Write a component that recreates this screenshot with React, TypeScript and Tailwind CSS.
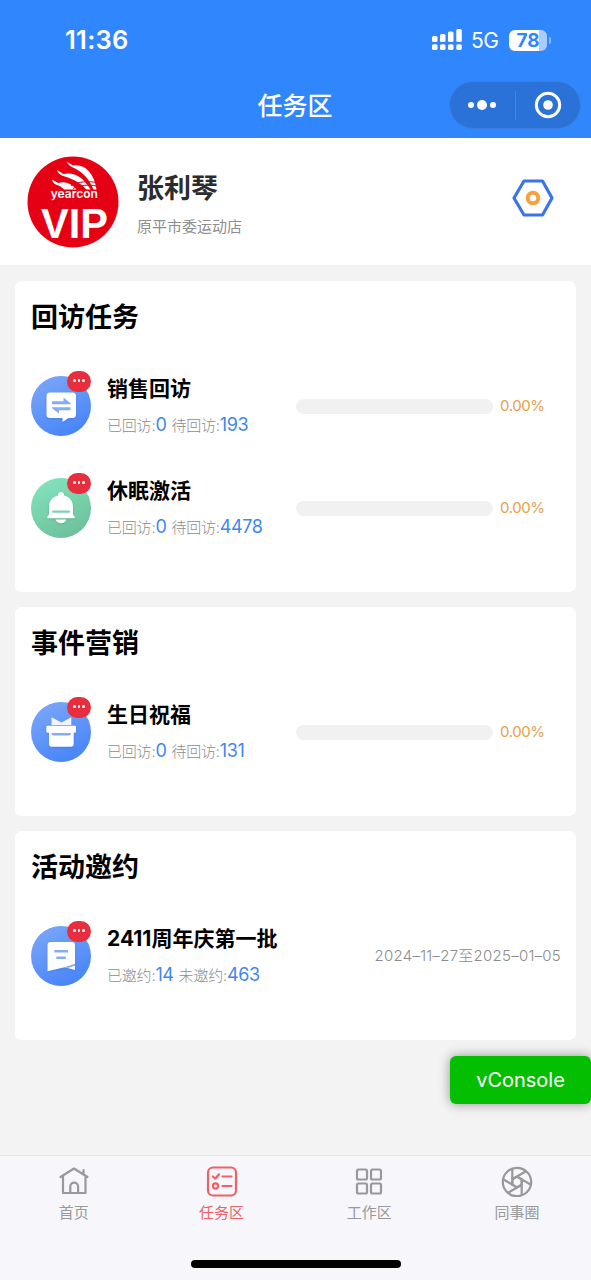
import type { ReactNode } from 'react';

type Task = {
  id: number;
  title: string;
  doneLabel: string;
  done: number;
  todoLabel: string;
  todo: number;
  icon: ReactNode;
  percent?: number;
  period?: string;
};

function ChatIcon() {
  return (
    <svg viewBox="0 0 60 60" className="w-15 h-15 block">
      <defs>
        <linearGradient id="chatBg" x1="0.2" y1="0" x2="0.7" y2="1">
          <stop offset="0" stopColor="#7ba6f8" />
          <stop offset="1" stopColor="#4684f8" />
        </linearGradient>
      </defs>
      <circle cx="30" cy="30" r="30" fill="url(#chatBg)" />
      <path d="M19 16.500H41.500a3.500 3.500 0 0 1 3.500 3.500V38.500a3.500 3.500 0 0 1-3.500 3.500H37.500L31.500 46V42H19a3.500 3.500 0 0 1-3.500-3.500V20a3.500 3.500 0 0 1 3.500-3.500z" fill="#fff" style={{ filter: 'drop-shadow(0 1px 1px #3468d066)' }} />
      <path d="M21 25.200H32.500V21.500L39.500 27.200V28.200H21z" fill="#86acf6" />
      <path d="M39.500 31.200H21V32.200L28 37.500V34.200H39.500z" fill="#86acf6" />
    </svg>
  );
}

function BellIcon() {
  return (
    <svg viewBox="0 0 60 60" className="w-15 h-15 block">
      <defs>
        <linearGradient id="bellBg" x1="0.2" y1="0" x2="0.7" y2="1">
          <stop offset="0" stopColor="#83e3bd" />
          <stop offset="1" stopColor="#6cc09a" />
        </linearGradient>
      </defs>
      <circle cx="30" cy="30" r="30" fill="url(#bellBg)" />
      <g fill="#fff" style={{ filter: 'drop-shadow(0 1px 1px #3f8f6b66)' }}>
        <path d="M30 14a3 3 0 0 1 3 3v.6c5.500 1.200 9 5.600 9 11V36c0 1 1.400 1.700 1.700 3V40.300H16.300V39c.3-1.300 1.700-2 1.700-3V28.600c0-5.400 3.500-9.800 9-11V17a3 3 0 0 1 3-3z" />
        <path d="M24.500 41.500h11c-.8 2.400-3 3.700-5.500 3.700s-4.700-1.300-5.500-3.700z" />
      </g>
      <rect x="21" y="32.500" width="18" height="2.200" rx="1" fill="#83cfab" />
    </svg>
  );
}

function GiftIcon() {
  return (
    <svg viewBox="0 0 60 60" className="w-15 h-15 block">
      <defs>
        <linearGradient id="giftBg" x1="0.2" y1="0" x2="0.7" y2="1">
          <stop offset="0" stopColor="#7ba6f8" />
          <stop offset="1" stopColor="#4684f8" />
        </linearGradient>
      </defs>
      <circle cx="30" cy="30" r="30" fill="url(#giftBg)" />
      <path d="M20.500 15.200L30.500 20.500L40.300 15.200V23H20.500z" fill="#eff4ff" />
      <g fill="#fff" style={{ filter: 'drop-shadow(0 1px 1px #3468d066)' }}>
        <rect x="15.300" y="23.700" width="29.700" height="7" rx="1.200" />
        <path d="M18 30H42.700V42a2.800 2.800 0 0 1-2.800 2.800H20.800A2.800 2.800 0 0 1 18 42z" />
      </g>
      <path d="M20.500 31H40a2.500 2.500 0 0 1-2.500 2.500H23A2.500 2.500 0 0 1 20.500 31z" fill="#86acf6" />
    </svg>
  );
}

function NoteIcon() {
  return (
    <svg viewBox="0 0 60 60" className="w-15 h-15 block">
      <defs>
        <linearGradient id="noteBg" x1="0.2" y1="0" x2="0.7" y2="1">
          <stop offset="0" stopColor="#7ba6f8" />
          <stop offset="1" stopColor="#4684f8" />
        </linearGradient>
      </defs>
      <circle cx="30" cy="30" r="30" fill="url(#noteBg)" />
      <path d="M19.300 16H41a3 3 0 0 1 3 3V44L33.500 41.200L16.500 45.300V19a3 3 0 0 1 2.800-3z" fill="#fff" style={{ filter: 'drop-shadow(0 1px 1px #3468d066)' }} />
      <path d="M44 37.800L33.500 41.200L36.500 42L44 39.800z" fill="#86acf6" />
      <rect x="23.300" y="24" width="13.700" height="2.500" fill="#86acf6" />
      <rect x="25.300" y="30.500" width="9.500" height="2.500" fill="#86acf6" />
    </svg>
  );
}

const sections: { id: number; title: string; tasks: Task[] }[] = [
  {
    id: 1,
    title: '回访任务',
    tasks: [
      { id: 11, title: '销售回访', doneLabel: '已回访:', done: 0, todoLabel: '待回访:', todo: 193, icon: <ChatIcon />, percent: 0 },
      { id: 12, title: '休眠激活', doneLabel: '已回访:', done: 0, todoLabel: '待回访:', todo: 4478, icon: <BellIcon />, percent: 0 },
    ],
  },
  {
    id: 2,
    title: '事件营销',
    tasks: [
      { id: 21, title: '生日祝福', doneLabel: '已回访:', done: 0, todoLabel: '待回访:', todo: 131, icon: <GiftIcon />, percent: 0 },
    ],
  },
  {
    id: 3,
    title: '活动邀约',
    tasks: [
      { id: 31, title: '2411周年庆第一批', doneLabel: '已邀约:', done: 14, todoLabel: '未邀约:', todo: 463, icon: <NoteIcon />, period: '2024–11–27至2025–01–05' },
    ],
  },
];

function StatusBar() {
  return (
    <div className="flex items-center justify-between h-20 pl-[65px] pr-10 text-white">
      <span className="text-[25.5px] font-semibold leading-none tracking-[0.3px]">11:36</span>
      <div className="flex items-center">
        <svg viewBox="0 0 30 22" className="w-[30px] h-[22px] mr-[9px]" fill="#fff">
          <rect x="0" y="7" width="5.500" height="6" rx="1.500" />
          <rect x="8" y="5" width="5.500" height="8" rx="1.500" />
          <rect x="16" y="2.500" width="5.500" height="10.500" rx="1.500" />
          <rect x="24.300" y="0" width="5.500" height="13" rx="1.500" />
          <rect x="0" y="15.200" width="5.500" height="5.800" rx="1.500" />
          <rect x="8" y="15.200" width="5.500" height="5.800" rx="1.500" />
          <rect x="16" y="15.200" width="5.500" height="5.800" rx="1.500" />
          <rect x="24.300" y="15.200" width="5.500" height="5.800" rx="1.500" />
        </svg>
        <span className="w-[38px] text-[21px] leading-none tracking-[-0.6px]">5G</span>
        <div className="w-[38px] h-[21px] rounded-[6px] overflow-hidden bg-[linear-gradient(90deg,#fff_78%,#a9cbff_78%)] flex items-center justify-center text-[#2f86fd] text-[19px] font-bold leading-none">
          78
        </div>
        <div className="w-[2px] h-[7px] ml-[2px] rounded-r-full bg-[#8dbaff]"></div>
      </div>
    </div>
  );
}

function NavBar() {
  return (
    <div className="grid grid-cols-[1fr_auto_1fr] items-center h-[50px] pr-[10px]">
      <div></div>
      <h1 className="ml-[9px] mt-[2px] text-[25px] font-medium text-white leading-none">任务区</h1>
      <div className="justify-self-end flex items-center w-[132px] h-12 rounded-full bg-[#2a72d8] border border-[#3d80dc]">
        <div className="flex-1 flex items-center justify-center gap-[3px]">
          <span className="w-[6px] h-[6px] rounded-full bg-white"></span>
          <span className="w-[10px] h-[10px] rounded-full bg-white"></span>
          <span className="w-[6px] h-[6px] rounded-full bg-white"></span>
        </div>
        <div className="w-px h-[29px] bg-[#4485dd]"></div>
        <div className="flex-1 flex items-center justify-center">
          <svg viewBox="0 0 28 28" className="w-7 h-7">
            <circle cx="14" cy="14" r="11.700" fill="none" stroke="#fff" strokeWidth="3" />
            <circle cx="14" cy="14" r="4.800" fill="#fff" />
          </svg>
        </div>
      </div>
    </div>
  );
}

function Avatar() {
  return (
    <svg viewBox="0 0 92 92" className="w-[92px] h-[92px]">
      <circle cx="46" cy="46" r="45.500" fill="#e60013" />
      <g fill="#fff">
        <path d="M39.500 5.500L46 9.500C57 7.500 67 16 69.500 33.500H66.500C62 23 56 16 46.500 11.800C43.500 10.500 40.500 8.500 39.500 5.500z" />
        <path d="M30 14L36.500 18C47 15.500 56 21 63.500 33.500H59.500C52 26 46 23 37 20.300C33.500 19.200 30.500 17 30 14z" />
        <path d="M25 23.500L31 27C38 25 44 27.500 49.500 33.500H37C35 31 33 30 30 29C27.500 28 25.500 26.500 25 23.500z" />
      </g>
      <g fill="none" stroke="#e60013" strokeWidth="1">
        <path d="M44 29.500C52 25.500 60 25 70 26.500" />
        <path d="M46 32.500C53 29 61 28.500 70 30" />
      </g>
      <text x="47.300" y="41.500" textAnchor="middle" textLength="47" lengthAdjust="spacingAndGlyphs" fontFamily="Inter, sans-serif" fontWeight="600" fontSize="12" fill="#fff">yearcon</text>
      <text x="47.500" y="81.500" textAnchor="middle" textLength="67" lengthAdjust="spacingAndGlyphs" fontFamily="'Liberation Sans', sans-serif" fontWeight="700" fontSize="43" fill="#fff">VIP</text>
    </svg>
  );
}

function TaskRow({ task }: { task: Task }) {
  return (
    <div className="flex items-center h-[102px] pl-4 pr-[15px]">
      <div className="relative shrink-0 mr-4">
        {task.icon}
        <div className="absolute -top-[5px] right-0 w-6 h-[21px] rounded-full bg-[#e82e3e] flex items-center justify-center gap-[2px] pb-[2px]">
          <span className="w-[2.4px] h-[2.4px] rounded-full bg-white"></span>
          <span className="w-[2.4px] h-[2.4px] rounded-full bg-white"></span>
          <span className="w-[2.4px] h-[2.4px] rounded-full bg-white"></span>
        </div>
      </div>
      <div className="flex-1 whitespace-nowrap pt-[2px]">
        <h3 className="text-[21px] leading-[30px] font-bold text-black">{task.title}</h3>
        <p className="mt-[7px] text-[15px] leading-7 font-light tracking-[-0.2px] text-[#8c8c8c]">
          {task.doneLabel}
          <span className="text-[18px] font-normal tracking-[-0.4px] text-[#3f87ee] mr-[5px]">{task.done}</span>
          {task.todoLabel}
          <span className="text-[18px] font-normal tracking-[-0.4px] text-[#3f87ee]">{task.todo}</span>
        </p>
      </div>
      {task.period ? (
        <span className="text-[15px] font-light tracking-[0.25px] text-[#8c8c8c] whitespace-nowrap">{task.period}</span>
      ) : (
        <div className="flex items-center w-[265px]">
          <div className="w-[197px] h-[15px] rounded-full bg-[#f1f1f1] overflow-hidden">
            <div className="h-full bg-[#e6a04c]" style={{ width: `${task.percent}%` }}></div>
          </div>
          <span className="ml-[7px] text-[15px] tracking-[-0.4px] text-[#e6a04c]">{task.percent?.toFixed(2)}%</span>
        </div>
      )}
    </div>
  );
}

const tabs = [
  {
    label: '首页',
    active: false,
    icon: (
      <>
        <path d="M2.500 12L16 3.500L29.500 12M5 11V28H27.500V11M25.500 9V5" />
        <path d="M12.300 28V21.500a3.900 3.900 0 0 1 7.800 0V28" />
      </>
    ),
  },
  {
    label: '任务区',
    active: true,
    icon: (
      <>
        <rect x="2" y="2.500" width="28" height="28" rx="5" />
        <path d="M7 11.500L9.300 13.700L13 9.300M16.500 11.500H25.500M16.500 21H25.500" />
        <circle cx="9.500" cy="21" r="2.600" />
      </>
    ),
  },
  {
    label: '工作区',
    active: false,
    icon: (
      <>
        <rect x="4" y="4.500" width="10" height="10" rx="1.500" />
        <rect x="18" y="4.500" width="10" height="10" rx="1.500" />
        <rect x="4" y="18.500" width="10" height="10" rx="1.500" />
        <rect x="18" y="18.500" width="10" height="10" rx="1.500" />
      </>
    ),
  },
  {
    label: '同事圈',
    active: false,
    icon: (
      <>
        <circle cx="16" cy="17" r="14.200" />
        <path d="M11.300 14.300L16 11.600L20.700 14.300V19.700L16 22.400L11.300 19.700z" />
        <path d="M11.300 19.700V4.200M11.300 14.300L24.500 6.500M16 11.600L29.500 19.500M20.700 14.300V29.800M20.700 19.700L7.500 27.500M16 22.400L2.500 14.500" />
      </>
    ),
  },
];

export default function App() {
  return (
    <div className="relative flex flex-col w-full h-[1280px] overflow-hidden bg-[#f3f3f3] font-[Inter,'Noto_Sans_CJK_SC',sans-serif]">
      <header className="h-[138px] shrink-0 bg-[#2f86fd]">
        <StatusBar />
        <NavBar />
      </header>

      {/* 用户信息 */}
      <section className="flex items-center h-[127px] shrink-0 pl-[27px] pr-[37px] bg-white">
        <Avatar />
        <div className="flex-1 ml-[18px] pt-[6px]">
          <h2 className="text-[27px] leading-9 font-bold text-[#2c2c2c]">张利琴</h2>
          <p className="mt-[8px] text-[15px] leading-6 text-[#8e8e8e]">原平市委运动店</p>
        </div>
        <svg viewBox="0 0 42 38" className="w-[42px] h-[38px] -mt-2">
          <path d="M12 2H30.500L40 19L30.500 36H12L2 19z" fill="none" stroke="#3b74ea" strokeWidth="3.200" strokeLinejoin="round" />
          <circle cx="21" cy="19" r="5.300" fill="none" stroke="#f8a23d" strokeWidth="4" />
        </svg>
      </section>

      {/* 任务列表 */}
      <main className="flex-1 flex flex-col gap-[15px] px-[15px] pt-4">
        {sections.map((section) => (
          <section key={section.id} className="bg-white rounded-[7px] pb-[33px]">
            <h2 className="h-[74px] pl-4 leading-[74px] text-[27px] font-bold text-black">{section.title}</h2>
            {section.tasks.map((task) => (
              <TaskRow key={task.id} task={task} />
            ))}
          </section>
        ))}
      </main>

      <button className="absolute right-0 top-[1056px] w-[141px] h-12 rounded-[6px] bg-[#04be02] text-white text-[20px] shadow-[0_0_12px_rgba(0,0,0,0.4)]">
        vConsole
      </button>

      {/* 底部导航 */}
      <footer className="h-[125px] shrink-0 flex flex-col justify-between bg-[#f6f6fb] border-t border-[#e5e5e8]">
        <nav className="grid grid-cols-4">
          {tabs.map((tab) => (
            <div
              key={tab.label}
              className={`flex flex-col items-center pt-[9px] ${tab.active ? 'text-[#ee6265]' : 'text-[#999999]'}`}
            >
              <svg viewBox="0 0 32 32" className="w-8 h-8" fill="none" stroke="currentColor" strokeWidth="2.200" strokeLinecap="round" strokeLinejoin="round">
                {tab.icon}
              </svg>
              <span className="mt-[6px] text-[15px] leading-5">{tab.label}</span>
            </div>
          ))}
        </nav>
        <div className="w-[210px] h-2 mb-3 rounded-full bg-black self-center"></div>
      </footer>
    </div>
  );
}
